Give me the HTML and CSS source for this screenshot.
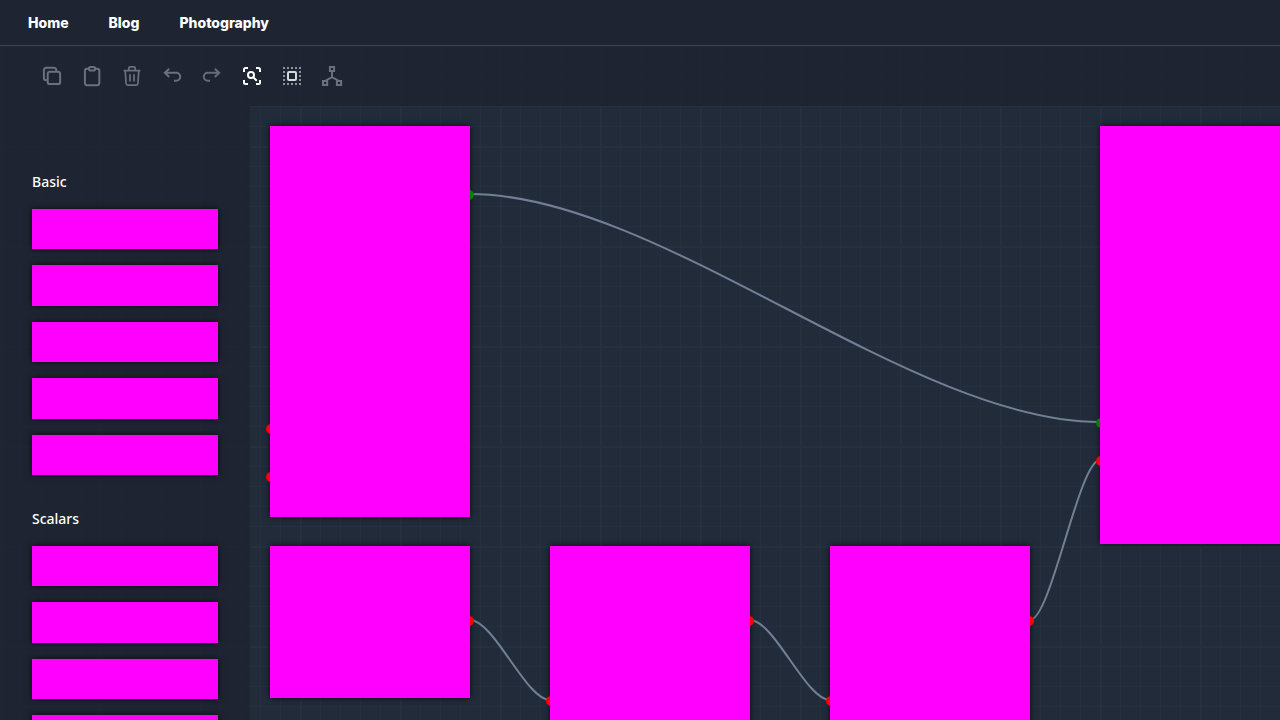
FILE: index.html
```html
<!DOCTYPE html>
<html lang="en">
<head>
<meta charset="utf-8">
<meta name="viewport" content="width=device-width, initial-scale=1">
<title>Node editor</title>
<link rel="stylesheet" href="styles.css">
</head>
<body>
<header class="site-header">
  <nav class="site-nav">
    <a href="#home">Home</a>
    <a href="#blog">Blog</a>
    <a href="#photography">Photography</a>
  </nav>
</header>
<main class="editor">
  <section class="canvas" aria-label="Graph">
    <svg class="links" aria-hidden="true">
      <path d="M470 148C660 148 910 376 1100 376"/>
      <path d="M470 574C494 574 526 654 550 654"/>
      <path d="M750 574C774 574 806 654 830 654"/>
      <path d="M1030 574C1051 574 1079 414 1100 414"/>
    </svg>
    <div class="node node-a"><i class="port port-out port-green port-y64"></i><i class="port port-in port-y298"></i><i class="port port-in port-y346"></i></div>
    <div class="node node-b"><i class="port port-out port-y70"></i></div>
    <div class="node node-c"><i class="port port-out port-y70"></i><i class="port port-in port-y150"></i></div>
    <div class="node node-d"><i class="port port-out port-y70"></i><i class="port port-in port-y150"></i></div>
    <div class="node node-e"><i class="port port-in port-green port-y292"></i><i class="port port-in port-y330"></i></div>
  </section>
  <div class="toolbar" role="toolbar" aria-label="Editing">
    <button type="button" class="tool" aria-label="Copy"><svg viewBox="0 0 24 24"><rect x="7.7" y="7.7" width="12.4" height="12.4" rx="2.2"/><path d="M16.3 7.6V6a2.2 2.2 0 0 0-2.2-2.2h-8A2.2 2.2 0 0 0 3.9 6v8a2.2 2.2 0 0 0 2.2 2.2h1.5"/></svg></button>
    <button type="button" class="tool" aria-label="Paste"><svg viewBox="0 0 24 24"><path d="M8.8 4.7H7A2.1 2.1 0 0 0 4.9 6.8v12.3A2.1 2.1 0 0 0 7 21.2h10.2a2.1 2.1 0 0 0 2.1-2.1V6.8a2.1 2.1 0 0 0-2.1-2.1h-1.9"/><rect x="8.9" y="3" width="6.3" height="3.6" rx="1.8"/></svg></button>
    <button type="button" class="tool tool-thin" aria-label="Delete"><svg viewBox="0 0 24 24"><path d="M3.6 6.7h16.8M5.2 6.7l.9 12.8A1.7 1.7 0 0 0 7.8 21.1h8.4a1.7 1.7 0 0 0 1.7-1.6l.9-12.8M8.8 6.5V4.2A1.3 1.3 0 0 1 10.1 2.9h3.8a1.3 1.3 0 0 1 1.3 1.3v2.3M10 10.2v7.4M14 10.2v7.4"/></svg></button>
    <button type="button" class="tool" aria-label="Undo"><svg viewBox="0 0 24 24"><path d="M9.2 4.7 4.8 8.8l4.4 4.1M5 8.8h11.2a4 4 0 0 1 0 8H14"/></svg></button>
    <button type="button" class="tool tool-dim" aria-label="Redo"><svg viewBox="0 0 24 24"><path d="M14.8 4.7 19.2 8.8l-4.4 4.1M19 8.8H7.8a4 4 0 0 0 0 8H10"/></svg></button>
    <button type="button" class="tool tool-on" aria-label="Zoom to fit"><svg viewBox="0 0 24 24"><path d="M4 8V5.5A1.5 1.5 0 0 1 5.5 4H8M16 4h2.5A1.5 1.5 0 0 1 20 5.5V8M20 16v2.5a1.5 1.5 0 0 1-1.5 1.5H16M8 20H5.5A1.5 1.5 0 0 1 4 18.5V16M13.4 13.4l3.4 3.4"/><circle cx="11" cy="11" r="3"/></svg></button>
    <button type="button" class="tool tool-select" aria-label="Select all"><svg viewBox="0 0 24 24"><path class="dots" d="M3 4h18M3 20h18M4 7v10M20 7v10"/><rect x="8" y="8" width="8" height="8" rx="1"/></svg></button>
    <button type="button" class="tool" aria-label="Arrange"><svg viewBox="0 0 24 24"><path d="M9.9 3h4.2v4H9.9zM3 17.1h4.2v4H3zM16.9 17.1h4.2v4h-4.2zM12 7v6.2M5.6 17l.4-.6 6-3.2 6 3.2.4.6"/></svg></button>
  </div>
  <aside class="sidebar">
    <section class="group">
      <h2>Basic</h2>
      <div class="items"><div class="item"></div><div class="item"></div><div class="item"></div><div class="item"></div><div class="item"></div></div>
    </section>
    <section class="group">
      <h2>Scalars</h2>
      <div class="items"><div class="item"></div><div class="item"></div><div class="item"></div><div class="item"></div><div class="item"></div></div>
    </section>
  </aside>
</main>
</body>
</html>
```
FILE: styles.css
```css
* {
  box-sizing: border-box;
}

body {
  margin: 0;
  height: 100vh;
  display: flex;
  flex-direction: column;
  overflow: hidden;
  background: #1e2431;
  color: #fff;
  font-family: "Noto Sans", sans-serif;
}

.site-header {
  padding: 12px 28px;
  border-bottom: 1px solid #41454d;
}

.site-nav {
  display: flex;
  gap: 40px;
}

.site-nav a {
  color: #fff;
  font: 800 14px/21px Inter, sans-serif;
  text-decoration: none;
}

.editor {
  flex: 1;
  min-height: 0;
  display: grid;
  grid-template: 60px minmax(0, 1fr) / 250px minmax(0, 1fr);
}

.canvas {
  grid-area: 1 / 1 / -1 / -1;
  position: relative;
  overflow: hidden;
  background-color: #212b3a;
  background-image:
    linear-gradient(#25313e 2px, transparent 2px),
    linear-gradient(90deg, #25313e 2px, transparent 2px),
    linear-gradient(#25303e 1px, transparent 1px),
    linear-gradient(90deg, #25303e 1px, transparent 1px);
  background-size: 100px 100px, 100px 100px, 20px 20px, 20px 20px;
}

.links {
  position: absolute;
  inset: 0;
  width: 100%;
  height: 100%;
}

.links path {
  fill: none;
  stroke: #718096;
  stroke-width: 2;
}

.node {
  position: absolute;
  width: 200px;
  box-shadow: 0 0 6px rgba(0, 0, 0, 0.7);
}

.node::after {
  content: "";
  position: absolute;
  inset: 0;
  background: #f0f;
}

.node-a {
  left: 270px;
  top: 80px;
  height: 391px;
}

.node-b {
  left: 270px;
  top: 500px;
  height: 152px;
}

.node-c {
  left: 550px;
  top: 500px;
  height: 232px;
}

.node-d {
  left: 830px;
  top: 500px;
  height: 232px;
}

.node-e {
  left: 1100px;
  top: 80px;
  height: 418px;
}

.port {
  position: absolute;
  width: 10px;
  height: 10px;
  border-radius: 50%;
  background: #f00;
}

.port-green {
  background: #008000;
}

.port-in {
  left: -4px;
}

.port-out {
  right: -4px;
}

.port-y64 {
  top: 64px;
}

.port-y70 {
  top: 70px;
}

.port-y150 {
  top: 150px;
}

.port-y292 {
  top: 292px;
}

.port-y298 {
  top: 298px;
}

.port-y330 {
  top: 330px;
}

.port-y346 {
  top: 346px;
}

.toolbar {
  grid-area: 1 / 1 / 2 / -1;
  z-index: 1;
  display: flex;
  align-items: center;
  padding: 0 32px;
  background: rgba(30, 35, 48, 0.8);
}

.tool {
  width: 40px;
  height: 40px;
  padding: 8px;
  border: 0;
  background: none;
  color: #6b717b;
}

.tool svg {
  display: block;
  width: 24px;
  height: 24px;
  fill: none;
  stroke: currentColor;
  stroke-width: 2;
}

.tool-thin svg {
  stroke-width: 1.7;
}

.tool-dim {
  color: #666c76;
}

.tool-on {
  color: #fff;
}

.tool-select {
  color: #d6d8db;
}

.dots {
  stroke: #8d929a;
  stroke-dasharray: 2 2;
}

.sidebar {
  grid-area: 2 / 1 / 3 / 2;
  z-index: 1;
  display: flex;
  flex-direction: column;
  gap: 32px;
  padding: 64px 32px 0;
  overflow: hidden;
  background: rgba(30, 35, 48, 0.8);
}

.group {
  flex: none;
}

.group h2 {
  margin: 0 0 15px;
  font-size: 14px;
  font-weight: 500;
  line-height: 24px;
}

.items {
  height: 266px;
  display: flex;
  flex-direction: column;
  gap: 16px;
}

.item {
  flex: 1;
  width: 186px;
  background: #f0f;
  box-shadow: 0 0 6px rgba(0, 0, 0, 0.7);
}
```
